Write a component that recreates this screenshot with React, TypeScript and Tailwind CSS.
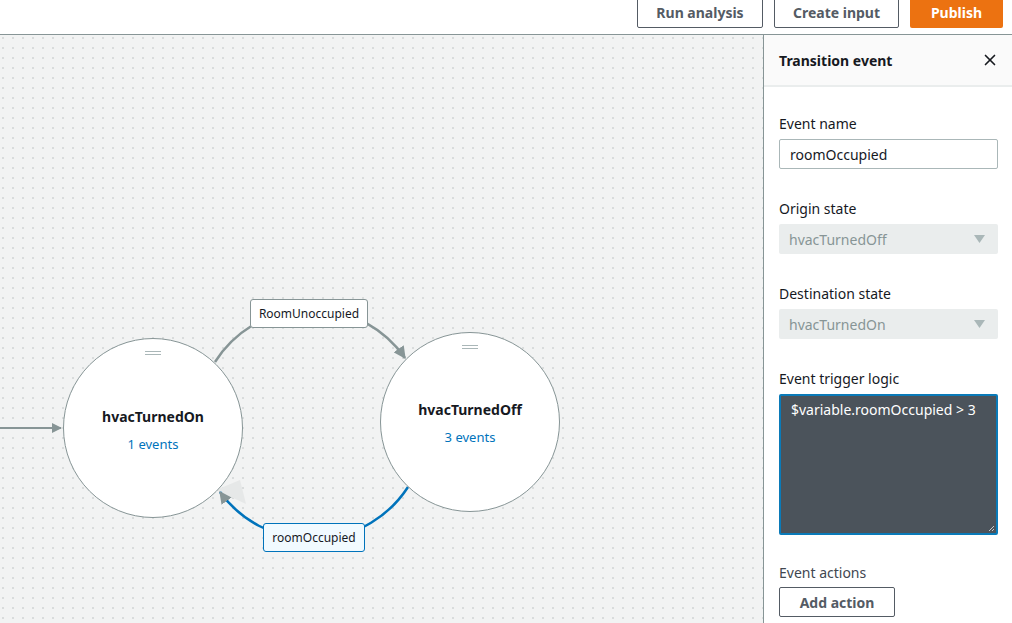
import { X } from "lucide-react";

const font = "font-['Noto_Sans',_'Open_Sans',_sans-serif]";

const buttons = [
  { label: "Run analysis", w: "w-[126px]", primary: false },
  { label: "Create input", w: "w-[125px]", primary: false },
  { label: "Publish", w: "w-[93px]", primary: true },
];

function TopBar() {
  return (
    <div className="flex h-[35px] items-end justify-end gap-[11px] border-b border-[#879596] bg-white pr-[9px] pb-[6px]">
      {buttons.map((b) => (
        <button
          key={b.label}
          className={
            b.primary
              ? `flex h-[36px] ${b.w} shrink-0 items-end justify-center rounded-[2px] bg-[#ec7211] pb-[5px] text-[14px] font-bold text-white`
              : `flex h-[36px] ${b.w} shrink-0 items-end justify-center rounded-[2px] border border-[#545b64] bg-white pb-[4px] text-[14px] font-bold text-[#545b64]`
          }
        >
          {b.label}
        </button>
      ))}
    </div>
  );
}

function StateNode({ className }: { className: string }) {
  return (
    <div
      className={`absolute flex h-[180px] w-[180px] flex-col items-center rounded-full border border-[#879596] bg-white ${className}`}
    >
      <div className="mt-[12px] flex w-[16px] flex-col gap-[2px]">
        <div className="h-px bg-[#aab7b8]" />
        <div className="h-px bg-[#aab7b8]" />
      </div>
    </div>
  );
}

function NodeText({ name, events, className }: { name: string; events: string; className: string }) {
  return (
    <div className={`absolute flex w-[180px] flex-col items-center ${className}`}>
      <p className="text-[14px] font-bold leading-[20px] text-[#16191f]">{name}</p>
      <p className="mt-[8px] text-[13px] leading-[18px] text-[#0073bb]">{events}</p>
    </div>
  );
}

function Canvas() {
  return (
    <div className="relative flex-1 overflow-hidden bg-[#f2f3f3] bg-[radial-gradient(circle,#d9dcdc_1px,transparent_1.5px)] bg-[length:10px_10px] bg-[position:-2px_-2px]">
      <svg className="absolute inset-0" width="763" height="588" viewBox="0 35 763 588">
        <defs>
          <marker id="ah" viewBox="0 0 10 10" refX="9" refY="5" markerWidth="5" markerHeight="5" orient="auto">
            <path d="M0 0 L10 5 L0 10 z" fill="#879596" />
          </marker>
        </defs>
        <line x1="0" y1="428" x2="61" y2="428" stroke="#879596" strokeWidth="2" markerEnd="url(#ah)" />
        <path d="M 215 362 A 114 114 0 0 1 405 358" fill="none" stroke="#879596" strokeWidth="2.5" markerEnd="url(#ah)" />
        <path d="M 216 490 L 240 480 L 246 504 Z" fill="#e6e8e8" />
        <path d="M 408 487 A 114 114 0 0 1 220 492" fill="none" stroke="#0073bb" strokeWidth="2.5" markerEnd="url(#ah)" />
      </svg>

      <StateNode className="left-[63px] top-[303px]" />
      <StateNode className="left-[380px] top-[297px]" />
      <NodeText name="hvacTurnedOn" events="1 events" className="left-[63px] top-[372px]" />
      <NodeText name="hvacTurnedOff" events="3 events" className="left-[380px] top-[365px]" />

      <div className="absolute left-[250px] top-[264px] flex h-[29px] w-[118px] items-center justify-center rounded-[3px] border border-[#879596] bg-white text-[12px] text-[#16191f]">
        RoomUnoccupied
      </div>
      <div className="absolute left-[263px] top-[488px] flex h-[29px] w-[102px] items-center justify-center rounded-[3px] border border-[#0073bb] bg-[#f1faff] text-[12px] text-[#16191f]">
        roomOccupied
      </div>
    </div>
  );
}

function Field({ label, children, className = "" }: { label: string; children: React.ReactNode; className?: string }) {
  return (
    <div className={className}>
      <p className="text-[14px] leading-[20px] text-[#16191f]">{label}</p>
      <div className="mt-[5px]">{children}</div>
    </div>
  );
}

function DisabledSelect({ value }: { value: string }) {
  return (
    <div className="flex h-[30px] items-center justify-between rounded-[2px] bg-[#eaeded] pr-[13px] pl-[10px] text-[14px] text-[#879596]">
      <span>{value}</span>
      <svg width="11" height="8" viewBox="0 0 11 8">
        <path d="M0 0 L11 0 L5.5 8 Z" fill="#aab7b8" />
      </svg>
    </div>
  );
}

function Panel() {
  return (
    <aside className="flex w-[249px] shrink-0 flex-col border-l border-[#879596] bg-white">
      <div className="flex h-[52px] items-center justify-between border-b-2 border-[#eaeded] bg-[#fafafa] pr-[13px] pl-[15px]">
        <p className="text-[14px] font-bold text-[#16191f]">Transition event</p>
        <X className="h-[18px] w-[18px] text-[#16191f]" strokeWidth={2.2} />
      </div>
      <div className="flex flex-col pr-[14px] pl-[15px] pt-[27px]">
        <Field label="Event name">
          <div className="flex h-[30px] items-center rounded-[2px] border border-[#aab7b8] px-[10px] text-[14px] text-[#16191f]">
            roomOccupied
          </div>
        </Field>
        <Field label="Origin state" className="mt-[30px]">
          <DisabledSelect value="hvacTurnedOff" />
        </Field>
        <Field label="Destination state" className="mt-[30px]">
          <DisabledSelect value="hvacTurnedOn" />
        </Field>
        <Field label="Event trigger logic" className="mt-[30px]">
          <div className="relative h-[141px] rounded-[2px] border-2 border-[#0a7ab8] bg-[#4b535b] px-[10px] pt-[3px] text-[14px] text-white">
            $variable.roomOccupied &gt; 3
            <svg className="absolute right-[1px] bottom-[1px]" width="7" height="7" viewBox="0 0 7 7">
              <path d="M6 1 L1 6 M6 4 L4 6" stroke="#c8cccc" strokeWidth="1" />
            </svg>
          </div>
        </Field>
        <p className="mt-[28px] text-[14px] leading-[20px] text-[#414750]">Event actions</p>
        <button className="mt-[4px] h-[30px] w-[116px] rounded-[2px] border border-[#545b64] text-[14px] font-bold text-[#545b64]">
          Add action
        </button>
      </div>
    </aside>
  );
}

export default function App() {
  return (
    <div className={`flex h-[623px] w-[1012px] flex-col overflow-hidden bg-white ${font}`}>
      <TopBar />
      <div className="flex flex-1">
        <Canvas />
        <Panel />
      </div>
    </div>
  );
}
